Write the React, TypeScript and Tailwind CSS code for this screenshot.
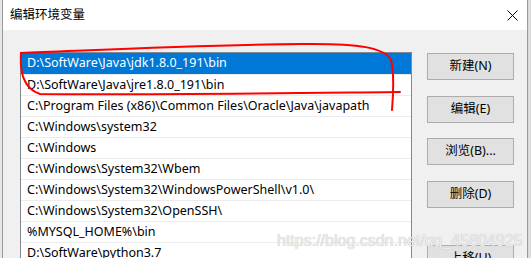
const paths = [
  "D:\\SoftWare\\Java\\jdk1.8.0_191\\bin",
  "D:\\SoftWare\\Java\\jre1.8.0_191\\bin",
  "C:\\Program Files (x86)\\Common Files\\Oracle\\Java\\javapath",
  "C:\\Windows\\system32",
  "C:\\Windows",
  "C:\\Windows\\System32\\Wbem",
  "C:\\Windows\\System32\\WindowsPowerShell\\v1.0\\",
  "C:\\Windows\\System32\\OpenSSH\\",
  "%MYSQL_HOME%\\bin",
  "D:\\SoftWare\\python3.7",
];

const font = "font-['Noto_Sans','Noto_Sans_CJK_SC',sans-serif]";

function Btn({ label, className }: { label: string; className?: string }) {
  return (
    <div
      className={`h-[27px] w-[87px] border border-[#adadad] bg-[#e1e1e1] flex items-center justify-center text-[12.5px] text-black ${className ?? ""}`}
    >
      {label}
    </div>
  );
}

export default function App() {
  return (
    <div className={`relative w-[531px] h-[258px] overflow-hidden flex bg-[#dcdcdc] ${font}`}>
      {/* window behind */}
      <div className="w-[2px] bg-[#e6e6e6]" />

      {/* dialog */}
      <div className="w-[526px] flex flex-col border-l border-r border-[#9a9a9a] bg-[#f0f0f0]">
        {/* title bar */}
        <div className="h-[30px] bg-white flex items-center justify-between pl-[7px] pr-[9px] shrink-0">
          <span className="text-[12.5px] text-black">编辑环境变量</span>
          <svg width="11" height="11" viewBox="0 0 11 11">
            <path d="M0.5 0.5 L10.5 10.5 M10.5 0.5 L0.5 10.5" stroke="#000" strokeWidth="1" />
          </svg>
        </div>

        {/* body */}
        <div className="flex pt-[22px] pl-[17px]">
          <div className="w-[392px] h-[300px] border border-[#828790] bg-white text-[12.5px] text-black">
            {paths.map((p, i) => (
              <div
                key={p}
                className={`h-[21px] flex items-center pl-[6px] whitespace-nowrap ${
                  i === 0
                    ? "bg-[#0078d7] text-white"
                    : "border-t border-[#ececec]"
                }`}
              >
                {p}
              </div>
            ))}
          </div>

          <div className="ml-[15px] pt-[1px] flex flex-col">
            <Btn label="新建(N)" />
            <Btn label="编辑(E)" className="mt-[16px]" />
            <Btn label="浏览(B)..." className="mt-[15px]" />
            <Btn label="删除(D)" className="mt-[16px]" />
            <Btn label="上移(U)" className="mt-[37px]" />
          </div>
        </div>
      </div>

      {/* red hand-drawn mark */}
      <svg className="absolute left-0 top-0 pointer-events-none" width="531" height="258">
        <path
          d="M392 110 C393 95 395 75 391 60 C385 48 360 43 300 44 C200 45 100 50 21 53 C20 70 22 88 40 94 C150 95 300 93 400 92"
          fill="none"
          stroke="#ff0000"
          strokeWidth="2"
          strokeLinecap="round"
        />
      </svg>

      {/* watermark */}
      <div className="absolute left-[277px] top-[229px] text-[16px] font-['Liberation_Sans',sans-serif] text-[#ececec] [text-shadow:0_0_1px_#b0b0b0] pointer-events-none whitespace-nowrap">
        https://blog.csdn.net/qq_45804925
      </div>
    </div>
  );
}
